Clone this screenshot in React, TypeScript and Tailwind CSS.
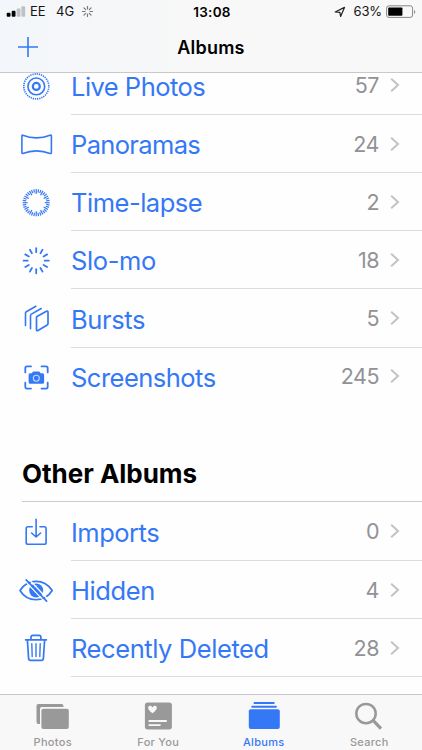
import type { ReactNode } from 'react';

const BLUE = '#3478f6';

function rays(count: number, inner: number, outer: number, offset = 0) {
  return Array.from({ length: count }, (_, i) => {
    const a = ((i + offset) * 2 * Math.PI) / count;
    return (
      <line
        key={`${i}-${offset}`}
        x1={18 + Math.sin(a) * inner}
        y1={18 - Math.cos(a) * inner}
        x2={18 + Math.sin(a) * outer}
        y2={18 - Math.cos(a) * outer}
      />
    );
  });
}

function Icon({ children }: { children: ReactNode }) {
  return (
    <svg
      viewBox="0 0 36 36"
      className="h-9 w-9 shrink-0"
      fill="none"
      stroke={BLUE}
      strokeWidth="1.6"
      strokeLinecap="round"
      strokeLinejoin="round"
    >
      {children}
    </svg>
  );
}

const LiveIcon = (
  <Icon>
    <circle cx="18.3" cy="17.4" r="3.5" strokeWidth="2.2" />
    <circle cx="18.3" cy="17.4" r="8.4" strokeWidth="1.6" />
    <circle cx="18.3" cy="17.4" r="12.5" strokeWidth="1.6" strokeDasharray="1.3 0.882" strokeLinecap="butt" />
  </Icon>
);
const PanoramaIcon = (
  <Icon>
    <path d="M4.8 8.9 Q18.5 14.3 32.1 8.9 Q33.4 8.6 33.4 9.8 V26.2 Q33.4 27.5 32.1 27.1 Q18.5 22 4.8 27.1 Q3.9 27.4 3.9 26.2 V9.8 Q3.9 8.6 4.8 8.9Z" transform="translate(0 -.7)" />
  </Icon>
);
const TimeLapseIcon = (
  <Icon>
    <g strokeWidth="1.2" strokeLinecap="butt" transform="translate(.2 -.3)">
      {rays(12, 8.6, 13.6)}
      {rays(12, 10.2, 13.6, 0.33)}
      {rays(12, 10.2, 13.6, 0.67)}
    </g>
  </Icon>
);
const SloMoIcon = (
  <Icon>
    <g strokeWidth="1.8" transform="translate(.2 -.3)">{rays(12, 8.5, 12.6)}</g>
  </Icon>
);
const BurstsIcon = (
  <Icon>
    <g transform="translate(0 -.5)">
      <path strokeWidth="1.7" d="M19 15.1 28.4 9.8Q30 9 30 10.8V22Q30 23 29.2 23.5L20 29Q18.5 29.8 18.5 28V16Q18.5 15.4 19 15.1Z" />
      <path d="M12.6 26.7V13.4Q12.6 12.5 13.5 12L23.3 6.4M7.6 23.5V11Q7.6 10.1 8.4 9.6L18 4.2" transform="translate(-.1 .6)" />
    </g>
  </Icon>
);
const ScreenshotIcon = (
  <Icon>
    <g transform="translate(0 -.6)">
      <path strokeWidth="1.8" d="M7.3 13V8.8Q7.3 7 9 7H13M23.5 7H28Q29.7 7 29.7 8.8V13M29.7 23.2V27.4Q29.7 29.2 28 29.2H23.5M13 29.2H9Q7.3 29.2 7.3 27.4V23.2" />
      <path d="M12.1 14.2H14.3L15.2 12.6H21L22 14.2H24.4Q25.2 14.2 25.2 15V22.4Q25.2 23.2 24.4 23.2H12.1Q11.3 23.2 11.3 22.4V15Q11.3 14.2 12.1 14.2Z" transform="translate(.1 .4)" fill={BLUE} />
      <circle cx="18.3" cy="18.9" r="3" stroke="#c5d9ff" strokeWidth="1.1" />
    </g>
  </Icon>
);
const ImportIcon = (
  <Icon>
    <path strokeWidth="1.6" d="M14.3 11.7H10Q8.2 11.7 8.2 13.5V27.5Q8.2 29.3 10 29.3H26.3Q28.1 29.3 28.1 27.5V13.5Q28.1 11.7 26.3 11.7H22M18.1 4.3V21.7M13.6 18 18.1 22 22.6 18" />
  </Icon>
);
const HiddenIcon = (
  <Icon>
    <g transform="translate(0 -.5)">
      <path d="M2 18C9.5 5.7 26.5 5.7 34.2 18C26.5 30.3 9.5 30.3 2 18Z" strokeWidth="1.7" />
      <circle cx="18.2" cy="18" r="7" fill={BLUE} stroke="none" />
      <path d="M15.3 16.5a4 4 0 0 1 3.6-3.3" stroke="#bcd3ff" strokeWidth=".8" />
      <path d="M10.2 6.2 30 27.2M7.2 8.8 27 29.8" stroke="#fff" strokeWidth="1.3" transform="translate(0 -.2)" />
      <path d="M8.2 7.4 28.6 28.6" strokeWidth="1.7" />
    </g>
  </Icon>
);
const TrashIcon = (
  <Icon>
    <g transform="translate(-.3 -1.2)">
      <path strokeWidth="1.7" d="M7.9 10H28.7M13.3 9.8V7.5Q13.3 5.6 15.2 5.6H21.3Q23.2 5.6 23.2 7.5V9.8M9.7 10.2 10.9 28.6Q11 30.6 13 30.6H23.6Q25.5 30.6 25.7 28.6L26.9 10.2" />
      <path strokeWidth="1.4" d="M14.1 14 14.5 26.7M18.3 14V26.7M22.5 14 22.1 26.7" />
    </g>
  </Icon>
);

type Album = { name: string; count: number; icon: ReactNode; height: string; spacing: string };

const mediaTypes: Album[] = [
  { name: 'Live Photos', count: 57, icon: LiveIcon, height: 'h-[59px]', spacing: 'tracking-[-0.52px]' },
  { name: 'Panoramas', count: 24, icon: PanoramaIcon, height: 'h-[58px]', spacing: 'tracking-[-0.65px]' },
  { name: 'Time-lapse', count: 2, icon: TimeLapseIcon, height: 'h-[58px]', spacing: 'tracking-[-0.48px]' },
  { name: 'Slo-mo', count: 18, icon: SloMoIcon, height: 'h-[58px]', spacing: 'tracking-[-0.4px]' },
  { name: 'Bursts', count: 5, icon: BurstsIcon, height: 'h-[59px]', spacing: 'tracking-[-0.4px]' },
  { name: 'Screenshots', count: 245, icon: ScreenshotIcon, height: 'h-[57px]', spacing: 'tracking-[-0.52px]' },
];
const otherAlbums: Album[] = [
  { name: 'Imports', count: 0, icon: ImportIcon, height: 'h-[59px]', spacing: 'tracking-[-0.5px]' },
  { name: 'Hidden', count: 4, icon: HiddenIcon, height: 'h-[58px]', spacing: 'tracking-[-0.4px]' },
  { name: 'Recently Deleted', count: 28, icon: TrashIcon, height: 'h-[58px]', spacing: 'tracking-[-0.42px]' },
];

function Row({ album, last }: { album: Album; last?: boolean }) {
  return (
    <div className={`flex pl-[18px] ${album.height}`}>
      <div className="flex w-[53px] items-center pt-[2px]">{album.icon}</div>
      <div className={`flex flex-1 items-center border-b pr-[22px] ${last ? 'border-transparent' : 'border-[#dcdcdd]'}`}>
        <span className={`flex-1 whitespace-nowrap pt-[3px] text-[25.5px] leading-[26px] text-[#3478f6] ${album.spacing}`}>{album.name}</span>
        <span className="text-[21.5px] leading-6 tracking-[-0.5px] text-[#929296]">{album.count}</span>
        <svg viewBox="0 0 10 16" className="ml-[11px] h-4 w-[10px]" fill="none" stroke="#c3c3c7" strokeWidth="2">
          <path d="M1.2 1.8 8 8 1.2 14.2" />
        </svg>
      </div>
    </div>
  );
}

function StatusBar() {
  return (
    <div className="grid h-6 grid-cols-3 items-center pr-[6px] pl-[6px] text-[13px] text-[#151515]">
      <div className="flex items-center">
        <svg viewBox="0 0 20 12" className="h-3 w-5">
          <rect x=".7" y="6.8" width="3.8" height="4" rx="1" fill="#000" />
          <rect x="5.7" y="4.8" width="3.8" height="6" rx="1" fill="#000" />
          <rect x="10.7" y="2.4" width="3.8" height="8.4" rx="1" fill="#bfc1c4" />
          <rect x="15.4" y=".2" width="3.8" height="10.6" rx="1" fill="#bfc1c4" />
        </svg>
        <span className="ml-[4px] w-[26px]">EE</span>
        <span className="w-[26px]">4G</span>
        <svg viewBox="5 5 26 26" className="mb-[2px] h-[11px] w-[11px]" stroke="#777" strokeWidth="2.8" strokeLinecap="round">
          {rays(8, 6, 12)}
        </svg>
      </div>
      <div className="pl-[2px] text-center text-[13.5px] font-semibold tracking-[0.3px] text-black">13:08</div>
      <div className="flex items-center justify-end">
        <svg viewBox="0 0 12 12" className="mr-[8px] h-3 w-3" fill="none" stroke="#222" strokeWidth="1.2" strokeLinejoin="round">
          <path d="M1.2 6 10.5 1.4 6.6 10.4 5.9 6.3Z" />
        </svg>
        <span className="tracking-[-0.15px]">63%</span>
        <svg viewBox="0 0 30 14" className="ml-[4px] h-[14px] w-[30px]">
          <rect x=".6" y=".8" width="26" height="11.6" rx="2.4" fill="none" stroke="#85868a" strokeWidth="1" />
          <rect x="2.2" y="2.4" width="14.2" height="8.4" rx=".8" fill="#000" />
          <path d="M28 5v4q1.3-.6 1.3-2T28 5" fill="#999" />
        </svg>
      </div>
    </div>
  );
}

function Tab({ label, active, children }: { label: string; active?: boolean; children: ReactNode }) {
  return (
    <div className={`flex flex-1 flex-col items-center ${active ? 'text-[#3478f6]' : 'text-[#999]'}`}>
      <svg viewBox="0 0 36 32" className="mt-[5px] h-8 w-9" fill="currentColor">
        {children}
      </svg>
      <span className="mt-[3px] text-[11px] font-medium leading-[14px] tracking-[0.3px]">{label}</span>
    </div>
  );
}

export default function App() {
  return (
    <div className="flex h-[750px] w-[422px] flex-col overflow-hidden bg-[#fefefe] font-['Inter','Liberation_Sans',sans-serif]">
      <header className="h-[73px] shrink-0 border-b border-[#c9c9cb] bg-gradient-to-r from-[#f3f6fa] to-[#f8f8f8] to-50%">
        <StatusBar />
        <div className="grid h-[46px] grid-cols-3 items-center">
          <svg viewBox="0 0 20 20" className="ml-[18px] h-5 w-5" stroke={BLUE} strokeWidth="1.6">
            <path d="M10 0V20M0 10H20" />
          </svg>
          <h1 className="text-center text-[18px] font-semibold tracking-[0.2px] text-black">Albums</h1>
        </div>
      </header>
      <main className="min-h-0 flex-1">
        <section className="-mt-[17px]">
          {mediaTypes.map((a, i) => (
            <Row key={a.name} album={a} last={i === mediaTypes.length - 1} />
          ))}
        </section>
        <section>
          <h2 className="ml-[22px] h-[97px] border-b border-[#cbcbcd] pt-[53px] text-[26px] font-bold leading-8 tracking-[-0.02px] text-black">
            Other Albums
          </h2>
          {otherAlbums.map((a) => (
            <Row key={a.name} album={a} />
          ))}
        </section>
      </main>
      <nav className="flex h-14 shrink-0 border-t border-[#c5c5c7] bg-[#f8f8f8]">
        <Tab label="Photos">
          <path d="M3.2 4H26.5Q28.5 4 28.5 6V7H6.8Q5 7 5 8.8V24H3.2Q1.5 24 1.5 22V6Q1.5 4 3.2 4Z" />
          <rect x="6.4" y="8.8" width="27.4" height="20.2" rx="2" />
        </Tab>
        <Tab label="For You">
          <rect x="4.9" y="2.6" width="27" height="26.8" rx="2.6" />
          <path d="M12.5 13.3C3.8 7.3 10.5 3.5 12.5 7.4C14.5 3.5 21.2 7.3 12.5 13.3ZM8.6 20H26.8V22H8.6ZM8.6 24.3H20.6V26.1H8.6Z" fill="#f8f8f8" />
        </Tab>
        <Tab label="Albums" active>
          <rect x="7.5" y="2.1" width="21.2" height="1.9" rx=".9" />
          <rect x="5.3" y="5.8" width="25.6" height="1.9" rx=".9" />
          <rect x="2.8" y="9.2" width="31" height="19.8" rx="2" />
        </Tab>
        <Tab label="Search">
          <circle cx="15" cy="13.6" r="9.7" fill="none" stroke="currentColor" strokeWidth="2.5" />
          <path d="M22.3 20.7 30 28.7" stroke="currentColor" strokeWidth="3.2" />
        </Tab>
      </nav>
    </div>
  );
}
